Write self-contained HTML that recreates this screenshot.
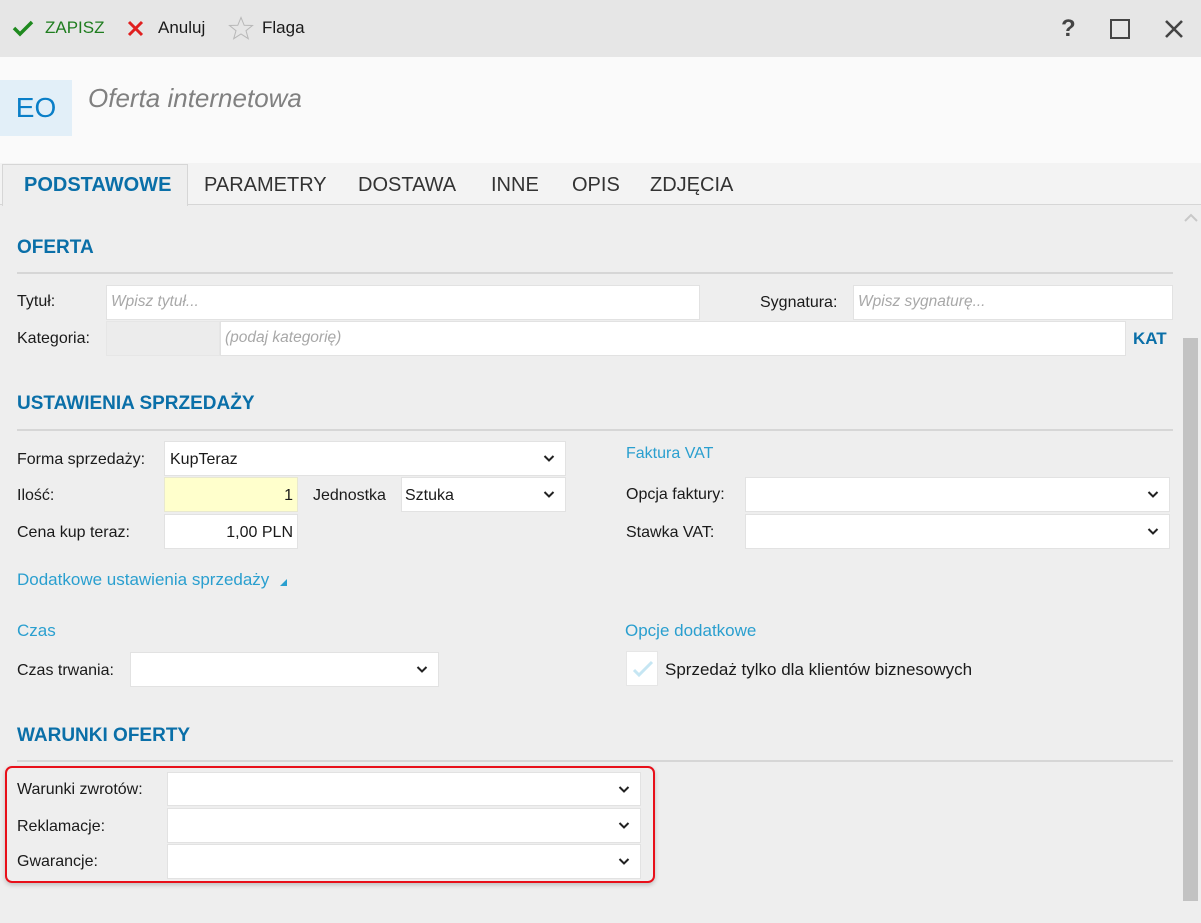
<!DOCTYPE html>
<html><head><meta charset="utf-8"><style>
*{box-sizing:border-box;margin:0;padding:0}
body{width:1201px;height:923px;overflow:hidden;background:#eeeeee;font-family:"Liberation Sans",sans-serif;font-size:16px;color:#1a1a1a;position:relative}
.a{position:absolute}
.t{position:absolute;white-space:nowrap;line-height:20px}
.in{position:absolute;background:#fff;border:1px solid #e2e2e2}
.ph{color:#a8a8a8;font-style:italic;padding-left:4px;line-height:32px;font-size:15.5px}
.h{position:absolute;color:#0a6fa8;font-weight:bold;font-size:19px;white-space:nowrap;line-height:22px}
.line{position:absolute;height:2px;background:#d6d6d6}
.blue{color:#2a9fcf}
.chev{position:absolute;right:10px;top:12px;width:12px;height:9px}
.lbl{position:absolute;white-space:nowrap;line-height:20px;font-size:16px}
</style></head><body>
<!-- toolbar -->
<div class="a" style="left:0;top:0;width:1201px;height:57px;background:#e6e6e6"></div>
<svg class="a" style="left:12px;top:19px" width="22" height="18" viewBox="0 0 22 18"><path d="M2 9 L8 15 L20 3" stroke="#1f8a1f" stroke-width="3.5" fill="none"/></svg>
<div class="t" style="left:45px;top:18px;color:#1f7d1f;font-size:17px">ZAPISZ</div>
<svg class="a" style="left:127px;top:20px" width="17" height="17" viewBox="0 0 17 17"><path d="M2 2L15 15M15 2L2 15" stroke="#e02020" stroke-width="3" fill="none"/></svg>
<div class="t" style="left:158px;top:18px;font-size:17px">Anuluj</div>
<svg class="a" style="left:228px;top:16px" width="26" height="24" viewBox="0 0 26 24"><path d="M13 1.5L16.2 9.3L24.5 9.5L18 14.7L20.3 22.7L13 18L5.7 22.7L8 14.7L1.5 9.5L9.8 9.3Z" stroke="#b8b8b8" stroke-width="1" fill="none"/></svg>
<div class="t" style="left:262px;top:18px;font-size:17px">Flaga</div>
<div class="t" style="left:1061px;top:16px;font-size:24px;color:#444;line-height:26px;font-weight:bold">?</div>
<div class="a" style="left:1110px;top:19px;width:20px;height:20px;border:2.5px solid #444"></div>
<svg class="a" style="left:1164px;top:19px" width="20" height="20" viewBox="0 0 20 20"><path d="M2 2L18 18M18 2L2 18" stroke="#444" stroke-width="2.6"/></svg>
<!-- header -->
<div class="a" style="left:0;top:57px;width:1201px;height:106px;background:#fafafa"></div>
<div class="a" style="left:0;top:80px;width:72px;height:56px;background:#e2eff8;color:#0a7fc8;font-size:28px;line-height:56px;text-align:center">EO</div>
<div class="t" style="left:88px;top:83px;font-size:26px;line-height:30px;font-style:italic;color:#808080">Oferta internetowa</div>
<!-- tabs -->
<div class="a" style="left:0;top:163px;width:1201px;height:42px;background:#f3f3f3;border-bottom:1px solid #d6d6d6"></div>
<div class="a" style="left:2px;top:164px;width:186px;height:42px;background:#eeeeee;border:1px solid #d6d6d6;border-bottom:none"></div>
<div class="t" style="left:24px;top:174px;font-size:20px;line-height:22px;font-weight:bold;color:#0a6fa8">PODSTAWOWE</div>
<div class="t" style="left:204px;top:174px;font-size:20px;line-height:22px;color:#333">PARAMETRY</div>
<div class="t" style="left:358px;top:174px;font-size:20px;line-height:22px;color:#333">DOSTAWA</div>
<div class="t" style="left:491px;top:174px;font-size:20px;line-height:22px;color:#333">INNE</div>
<div class="t" style="left:572px;top:174px;font-size:20px;line-height:22px;color:#333">OPIS</div>
<div class="t" style="left:650px;top:174px;font-size:20px;line-height:22px;color:#333">ZDJĘCIA</div>
<!-- scrollbar -->
<svg class="a" style="left:1183px;top:213px" width="16" height="10" viewBox="0 0 16 10"><path d="M2 8L8 2L14 8" stroke="#c8c8c8" stroke-width="2" fill="none"/></svg>
<div class="a" style="left:1183px;top:338px;width:15px;height:563px;background:#c2c2c2"></div>
<!-- OFERTA -->
<div class="h" style="left:17px;top:237px">OFERTA</div>
<div class="line" style="left:17px;top:272px;width:1156px"></div>
<div class="lbl" style="left:17px;top:292px">Tytuł:</div>
<div class="in ph" style="left:106px;top:285px;width:594px;height:35px">Wpisz tytuł...</div>
<div class="lbl" style="left:760px;top:293px">Sygnatura:</div>
<div class="in ph" style="left:853px;top:285px;width:320px;height:35px">Wpisz sygnaturę...</div>
<div class="lbl" style="left:17px;top:329px">Kategoria:</div>
<div class="a" style="left:106px;top:321px;width:114px;height:35px;background:#ececec;border:1px solid #e6e6e6"></div>
<div class="in ph" style="left:220px;top:321px;width:906px;height:35px">(podaj kategorię)</div>
<div class="t" style="left:1133px;top:329px;color:#0a6fa8;font-weight:bold;font-size:17px">KAT</div>
<!-- USTAWIENIA -->
<div class="h" style="left:17px;top:393px">USTAWIENIA SPRZEDAŻY</div>
<div class="line" style="left:17px;top:429px;width:1156px"></div>
<div class="lbl" style="left:17px;top:450px">Forma sprzedaży:</div>
<div class="in" style="left:164px;top:441px;width:402px;height:35px"><span class="t" style="left:5px;top:8px">KupTeraz</span><svg class="chev" viewBox="0 0 12 9"><path d="M1.5 2L6 6.5L10.5 2" stroke="#222" stroke-width="2" fill="none"/></svg></div>
<div class="lbl" style="left:17px;top:486px">Ilość:</div>
<div class="a" style="left:164px;top:477px;width:134px;height:35px;background:#ffffcc;border:1px solid #e8e8d0"><span class="t" style="right:4px;top:8px">1</span></div>
<div class="lbl" style="left:313px;top:486px">Jednostka</div>
<div class="in" style="left:401px;top:477px;width:165px;height:35px"><span class="t" style="left:3px;top:8px">Sztuka</span><svg class="chev" viewBox="0 0 12 9"><path d="M1.5 2L6 6.5L10.5 2" stroke="#222" stroke-width="2" fill="none"/></svg></div>
<div class="lbl" style="left:17px;top:523px">Cena kup teraz:</div>
<div class="in" style="left:164px;top:514px;width:134px;height:35px"><span class="t" style="right:4px;top:8px">1,00 PLN</span></div>
<div class="lbl blue" style="left:626px;top:444px">Faktura VAT</div>
<div class="lbl" style="left:626px;top:485px">Opcja faktury:</div>
<div class="in" style="left:745px;top:477px;width:425px;height:35px"><svg class="chev" viewBox="0 0 12 9"><path d="M1.5 2L6 6.5L10.5 2" stroke="#222" stroke-width="2" fill="none"/></svg></div>
<div class="lbl" style="left:626px;top:523px">Stawka VAT:</div>
<div class="in" style="left:745px;top:514px;width:425px;height:35px"><svg class="chev" viewBox="0 0 12 9"><path d="M1.5 2L6 6.5L10.5 2" stroke="#222" stroke-width="2" fill="none"/></svg></div>
<div class="lbl blue" style="left:17px;top:570px;font-size:17px">Dodatkowe ustawienia sprzedaży <svg width="10" height="10" viewBox="0 0 10 10" style="margin-left:4px;vertical-align:-2px"><path d="M9 2L9 9L2 9Z" fill="#2a9fcf"/></svg></div>
<div class="lbl blue" style="left:17px;top:621px;font-size:17px">Czas</div>
<div class="lbl" style="left:17px;top:661px">Czas trwania:</div>
<div class="in" style="left:130px;top:652px;width:309px;height:35px"><svg class="chev" viewBox="0 0 12 9"><path d="M1.5 2L6 6.5L10.5 2" stroke="#222" stroke-width="2" fill="none"/></svg></div>
<div class="lbl blue" style="left:625px;top:621px;font-size:17px">Opcje dodatkowe</div>
<div class="in" style="left:626px;top:651px;width:32px;height:35px;border-color:#e6e6e6"><svg class="a" style="left:5px;top:8px" width="22" height="18" viewBox="0 0 22 18"><path d="M2 10L7 15L20 2" stroke="#c6e6f3" stroke-width="3" fill="none"/></svg></div>
<div class="lbl" style="left:665px;top:660px;font-size:17px">Sprzedaż tylko dla klientów biznesowych</div>
<!-- WARUNKI -->
<div class="h" style="left:17px;top:725px">WARUNKI OFERTY</div>
<div class="line" style="left:17px;top:760px;width:1156px"></div>
<div class="a" style="left:5px;top:766px;width:650px;height:117px;border:2px solid #e8101a;border-radius:7px;box-shadow:0 2px 5px rgba(0,0,0,.2)"></div>
<div class="lbl" style="left:17px;top:780px">Warunki zwrotów:</div>
<div class="in" style="left:167px;top:772px;width:474px;height:34px"><svg class="chev" viewBox="0 0 12 9"><path d="M1.5 2L6 6.5L10.5 2" stroke="#222" stroke-width="2" fill="none"/></svg></div>
<div class="lbl" style="left:17px;top:817px">Reklamacje:</div>
<div class="in" style="left:167px;top:808px;width:474px;height:35px"><svg class="chev" viewBox="0 0 12 9"><path d="M1.5 2L6 6.5L10.5 2" stroke="#222" stroke-width="2" fill="none"/></svg></div>
<div class="lbl" style="left:17px;top:852px">Gwarancje:</div>
<div class="in" style="left:167px;top:844px;width:474px;height:35px"><svg class="chev" viewBox="0 0 12 9"><path d="M1.5 2L6 6.5L10.5 2" stroke="#222" stroke-width="2" fill="none"/></svg></div>
</body></html>
